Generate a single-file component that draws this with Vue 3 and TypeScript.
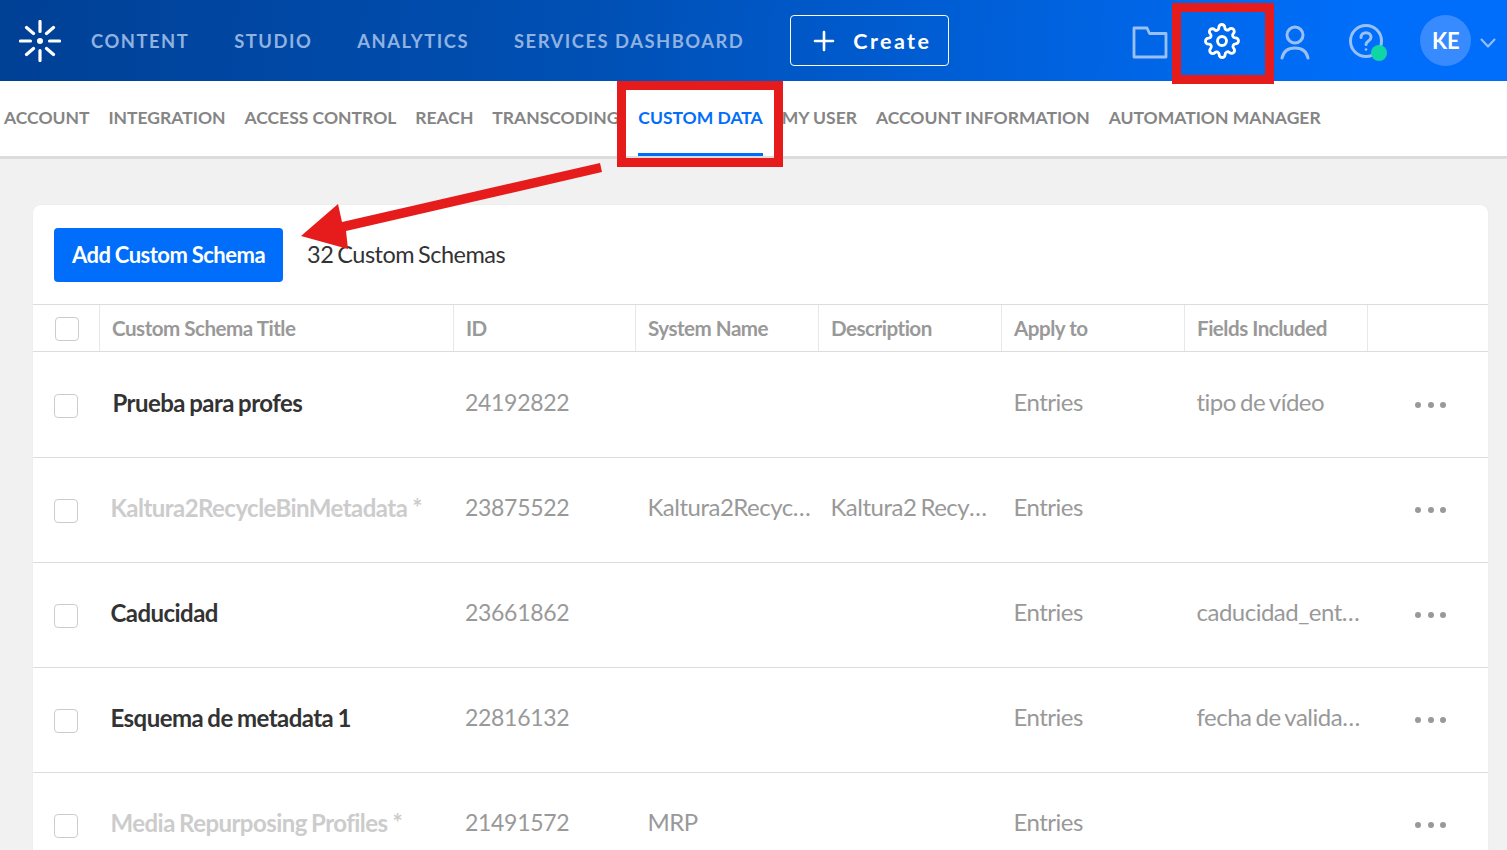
<template>
  <div class="page">
    <header class="topbar">
      <svg class="logo" width="42" height="42" viewBox="0 0 42 42" fill="none" stroke="#fff" stroke-width="3.2" stroke-linecap="round">
        <path d="M21 1.500v10M21 30.500v10M1.500 21h10M30.500 21h10M7.500 7.500l7 6M34.500 7.500l-7 6M7.500 34.500l7-6M34.500 34.500l-7-6" />
        <circle cx="21" cy="21" r="3" fill="#fff" stroke="none" />
      </svg>
      <nav class="main-nav">
        <a v-for="item in mainNav" :key="item" class="main-link">{{ item }}</a>
      </nav>
      <button class="create-btn">
        <svg width="22" height="22" viewBox="0 0 22 22" stroke="#fff" stroke-width="2.600" stroke-linecap="round">
          <path d="M11 2v18M2 11h18" />
        </svg>
        <span>Create</span>
      </button>
      <div class="top-icons">
        <svg class="icon-folder" width="36" height="34" viewBox="0 0 36 34" fill="none" stroke="#99c0f5" stroke-width="2.800" stroke-linejoin="round">
          <path d="M2 32V3h13l2.500 5.500H34V32z" />
        </svg>
        <svg class="icon-gear" width="36" height="36" viewBox="0 0 24 24" fill="none" stroke="#fff" stroke-width="1.900" stroke-linecap="round" stroke-linejoin="round">
          <circle cx="12" cy="12" r="3" />
          <path d="M19.400 15a1.650 1.650 0 0 0 .33 1.820l.06.06a2 2 0 1 1-2.830 2.830l-.06-.06a1.650 1.650 0 0 0-2.800 1.170V21a2 2 0 1 1-4 0v-.09a1.650 1.650 0 0 0-2.820-1.160l-.06.06a2 2 0 1 1-2.830-2.830l.06-.06a1.650 1.650 0 0 0-1.170-2.800H3a2 2 0 1 1 0-4h.09a1.650 1.650 0 0 0 1.160-2.820l-.06-.06a2 2 0 1 1 2.830-2.830l.06.06a1.650 1.650 0 0 0 2.800-1.170V3a2 2 0 1 1 4 0v.09a1.650 1.650 0 0 0 2.820 1.160l.06-.06a2 2 0 1 1 2.830 2.830l-.06.06a1.650 1.650 0 0 0 1.170 2.800H21a2 2 0 1 1 0 4h-.09a1.650 1.650 0 0 0-1.510 1.120z" />
        </svg>
        <svg class="icon-user" width="30" height="36" viewBox="0 0 30 36" fill="none" stroke="#99c0f5" stroke-width="3" stroke-linecap="round">
          <circle cx="15" cy="10" r="8" />
          <path d="M2 33c1.500-7 6.500-10 13-10s11.500 3 13 10" />
        </svg>
        <div class="help">
          <svg width="36" height="36" viewBox="0 0 36 36" fill="none" stroke="#99c0f5" stroke-width="3" stroke-linecap="round">
            <circle cx="18" cy="18" r="15.500" />
            <path d="M13 14.500c0-3 2.300-4.800 5-4.800s5 1.800 5 4.500c0 3.800-5 3.800-5 7.300" />
            <circle cx="18" cy="26.500" r="1.300" fill="#99c0f5" stroke="none" />
          </svg>
          <span class="help-dot"></span>
        </div>
        <div class="avatar">KE</div>
        <svg class="chevron" width="16" height="10" viewBox="0 0 16 10" fill="none" stroke="#99c0f5" stroke-width="2" stroke-linecap="round" stroke-linejoin="round">
          <path d="M1.500 1.500L8 8.500l6.500-7" />
        </svg>
      </div>
    </header>

    <nav class="sub-nav">
      <a v-for="tab in tabs" :key="tab" class="sub-link" :class="{ active: tab === 'CUSTOM DATA' }">{{ tab }}</a>
    </nav>

    <main class="content">
      <section class="card">
        <div class="toolbar">
          <button class="add-btn">Add Custom Schema</button>
          <span class="count">32 Custom Schemas</span>
        </div>

        <div class="table-head">
          <div class="head-cell check-cell"><span class="checkbox"></span></div>
          <div v-for="col in columns" :key="col" class="head-cell">{{ col }}</div>
          <div class="head-cell last"></div>
        </div>

        <div class="table-body">
          <div v-for="row in rows" :key="row.id" class="table-row">
            <div class="cell check-cell"><span class="checkbox"></span></div>
            <div class="cell title" :class="{ disabled: row.locked, nudge: row.id === '24192822' }">
              {{ row.title }}<span v-if="row.locked" class="star">*</span>
            </div>
            <div class="cell num">{{ row.id }}</div>
            <div class="cell text">{{ row.system }}</div>
            <div class="cell text">{{ row.description }}</div>
            <div class="cell">{{ row.apply }}</div>
            <div class="cell text">{{ row.fields }}</div>
            <div class="cell dots"><i></i><i></i><i></i></div>
          </div>
        </div>
      </section>
    </main>

    <!-- annotations drawn over the screenshot -->
    <div class="mark mark-gear"></div>
    <div class="mark mark-tab"></div>
    <svg class="arrow" width="1507" height="850" viewBox="0 0 1507 850">
      <path d="M600 163L342 222L338 204L301 236L348 249L346 231L602 172z" fill="#e61c1c" />
    </svg>
  </div>
</template>

<script setup lang="ts">
interface SchemaRow {
  title: string
  id: string
  system: string
  description: string
  apply: string
  fields: string
  locked: boolean
}

const mainNav = ['CONTENT', 'STUDIO', 'ANALYTICS', 'SERVICES DASHBOARD']

const tabs = [
  'ACCOUNT',
  'INTEGRATION',
  'ACCESS CONTROL',
  'REACH',
  'TRANSCODING',
  'CUSTOM DATA',
  'MY USER',
  'ACCOUNT INFORMATION',
  'AUTOMATION MANAGER'
]

const columns = ['Custom Schema Title', 'ID', 'System Name', 'Description', 'Apply to', 'Fields Included']

const rows: SchemaRow[] = [
  { title: 'Prueba para profes', id: '24192822', system: '', description: '', apply: 'Entries', fields: 'tipo de vídeo', locked: false },
  { title: 'Kaltura2RecycleBinMetadata', id: '23875522', system: 'Kaltura2RecycleBin', description: 'Kaltura2 Recycle Bin', apply: 'Entries', fields: '', locked: true },
  { title: 'Caducidad', id: '23661862', system: '', description: '', apply: 'Entries', fields: 'caducidad_entrada', locked: false },
  { title: 'Esquema de metadata 1', id: '22816132', system: '', description: '', apply: 'Entries', fields: 'fecha de validación', locked: false },
  { title: 'Media Repurposing Profiles', id: '21491572', system: 'MRP', description: '', apply: 'Entries', fields: '', locked: true }
]
</script>

<style scoped>
.page {
  position: relative;
  width: 1507px;
  height: 850px;
  overflow: hidden;
  background: #f1f1f1;
  font-family: Lato, "Open Sans", sans-serif;
}

.topbar {
  display: flex;
  align-items: center;
  height: 81px;
  padding-left: 19px;
  box-sizing: border-box;
  background: linear-gradient(95deg, #004095 0%, #0050b5 40%, #006efa 90%);
}

.logo {
  flex: none;
}

.main-nav {
  display: flex;
  flex: none;
  gap: 45px;
  margin-left: 30px;
}

.main-link {
  font-size: 18.400px;
  font-weight: 700;
  letter-spacing: 1.500px;
  color: #8fb2e0;
  white-space: nowrap;
}

.create-btn {
  display: flex;
  flex: none;
  align-items: center;
  gap: 18px;
  width: 159px;
  height: 51px;
  margin-left: 46px;
  padding: 0 0 0 22px;
  box-sizing: border-box;
  background: transparent;
  border: 1px solid #fff;
  border-radius: 4px;
  color: #fff;
  font-family: inherit;
  font-size: 21.500px;
  font-weight: 700;
  letter-spacing: 2.400px;
}

.top-icons {
  position: relative;
  flex: 1;
  display: flex;
  align-items: center;
  height: 100%;
}

.icon-folder {
  margin-left: 183px;
  margin-top: 2px;
}

.icon-gear {
  margin-left: 36px;
}

.icon-user {
  margin-left: 40px;
  margin-top: 4px;
}

.help {
  position: relative;
  width: 36px;
  height: 36px;
  margin-left: 38px;
}

.help-dot {
  position: absolute;
  left: 23px;
  top: 22px;
  width: 16px;
  height: 16px;
  border-radius: 50%;
  background: #10d6a5;
}

.avatar {
  display: flex;
  align-items: center;
  justify-content: center;
  width: 51px;
  height: 51px;
  margin-left: 36px;
  border-radius: 50%;
  background: #388bff;
  color: #fff;
  font-size: 22px;
  font-weight: 700;
}

.chevron {
  margin-left: 9px;
  margin-top: 4px;
}

.sub-nav {
  display: flex;
  gap: 18.900px;
  height: 78px;
  padding-left: 4px;
  box-sizing: border-box;
  background: #fff;
  border-bottom: 3px solid #dcdcdc;
}

.sub-link {
  position: relative;
  font-size: 17.500px;
  font-weight: 700;
  line-height: 74px;
  color: #858585;
  white-space: nowrap;
}

.sub-link.active {
  color: #006efa;
  border-bottom: 3px solid #006efa;
  height: 72px;
}

.content {
  padding: 46px 19px 0 33px;
}

.card {
  background: #fff;
  border-radius: 8px 8px 0 0;
  box-shadow: 0 0 2px rgba(0, 0, 0, 0.05);
}

.toolbar {
  display: flex;
  align-items: center;
  gap: 24px;
  height: 99px;
  padding-left: 21px;
  box-sizing: border-box;
}

.add-btn {
  width: 229px;
  height: 54px;
  padding: 0 0 1px;
  background: #006efa;
  border: none;
  border-radius: 4px;
  color: #fff;
  font-family: inherit;
  font-size: 22px;
  font-weight: 700;
  letter-spacing: -0.500px;
  word-spacing: -0.500px;
}

.count {
  padding-bottom: 2px;
  font-size: 23.500px;
  letter-spacing: -0.500px;
  word-spacing: -1.500px;
  color: #333;
}

.table-head,
.table-row {
  display: grid;
  grid-template-columns: 67px 354px 182px 183px 183px 183px 183px 1fr;
}

.table-head {
  height: 48px;
  box-sizing: border-box;
  border-top: 1px solid #dcdcdc;
  border-bottom: 1px solid #dcdcdc;
}

.table-body {
  padding-top: 1px;
}

.head-cell {
  display: flex;
  align-items: center;
  padding: 0 0 1px 12px;
  border-right: 1px solid #e8e8e8;
  font-size: 20.600px;
  font-weight: 700;
  letter-spacing: -0.500px;
  color: #999;
  white-space: nowrap;
}

.head-cell.last {
  border-right: none;
}

.table-row {
  height: 105px;
  box-sizing: border-box;
  border-bottom: 1px solid #dcdcdc;
}

.cell {
  display: block;
  padding: 34px 6px 0 11.500px;
  font-size: 24px;
  line-height: 30px;
  letter-spacing: -0.500px;
  word-spacing: -1.500px;
  color: #999;
  white-space: nowrap;
  overflow: hidden;
}

.cell.num {
  padding-left: 11px;
  font-size: 23px;
  letter-spacing: -0.300px;
}

.cell.text {
  text-overflow: ellipsis;
}

.check-cell {
  padding: 0 0 0 21px;
}

.head-cell.check-cell {
  padding: 1px 0 0 22px;
}

.cell.check-cell {
  padding-top: 41px;
}

.checkbox {
  display: block;
  width: 24px;
  height: 24px;
  box-sizing: border-box;
  background: #fff;
  border: 1px solid #ccc;
  border-radius: 4px;
}

.cell.title {
  overflow: visible;
  padding: 35px 0 0 10.500px;
  font-size: 24px;
  font-weight: 700;
  letter-spacing: -0.550px;
  word-spacing: -1px;
  color: #333;
}

.cell.title.nudge {
  padding-left: 12.500px;
}

.cell.title.disabled {
  color: #ccc;
}

.star {
  margin-left: 5px;
}

.dots {
  display: flex;
  gap: 6.500px;
  padding: 49px 0 0 47px;
  overflow: visible;
}

.dots i {
  display: block;
  width: 6px;
  height: 6px;
  border-radius: 50%;
  background: #999;
}

.mark {
  position: absolute;
  box-sizing: border-box;
  border: 9px solid #e61c1c;
}

.mark-gear {
  left: 1172px;
  top: 3px;
  width: 102px;
  height: 81px;
}

.mark-tab {
  left: 617px;
  top: 81px;
  width: 166px;
  height: 86px;
}

.arrow {
  position: absolute;
  left: 0;
  top: 0;
  pointer-events: none;
}
</style>

<style>
html,
body {
  margin: 0;
  overflow: hidden;
  background: #f1f1f1;
}
</style>
